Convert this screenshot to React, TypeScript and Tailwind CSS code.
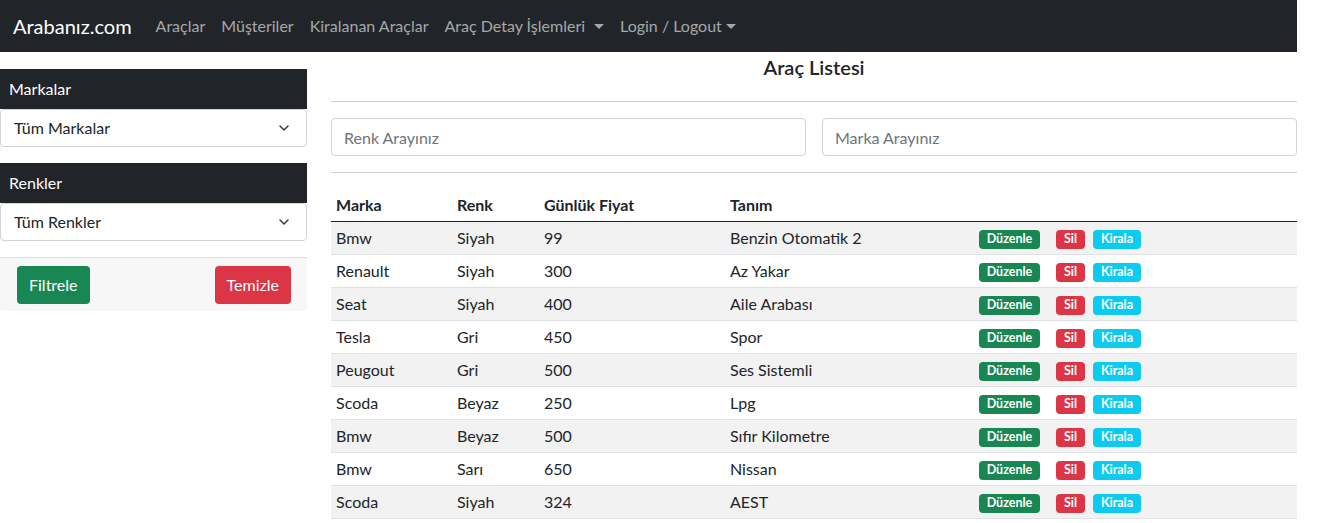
import { ChevronDown } from 'lucide-react'

const cars = [
  { brand: 'Bmw', color: 'Siyah', price: '99', desc: 'Benzin Otomatik 2' },
  { brand: 'Renault', color: 'Siyah', price: '300', desc: 'Az Yakar' },
  { brand: 'Seat', color: 'Siyah', price: '400', desc: 'Aile Arabası' },
  { brand: 'Tesla', color: 'Gri', price: '450', desc: 'Spor' },
  { brand: 'Peugout', color: 'Gri', price: '500', desc: 'Ses Sistemli' },
  { brand: 'Scoda', color: 'Beyaz', price: '250', desc: 'Lpg' },
  { brand: 'Bmw', color: 'Beyaz', price: '500', desc: 'Sıfır Kilometre' },
  { brand: 'Bmw', color: 'Sarı', price: '650', desc: 'Nissan' },
  { brand: 'Scoda', color: 'Siyah', price: '324', desc: 'AEST' },
]

function Caret({ tight }: { tight?: boolean }) {
  return (
    <span
      className={`${tight ? 'ml-[4px]' : 'ml-[9px]'} inline-block h-0 w-0 border-x-[5px] border-t-[5px] border-x-transparent border-t-current align-[3px]`}
    />
  )
}

function NavBar() {
  return (
    <nav className="flex h-[52px] w-[1297px] items-center bg-[#212529] pl-[13px]">
      <span className="mr-4 text-[20px] text-white">Arabanız.com</span>
      <ul className="flex text-[16px] text-[#a6a8aa]">
        <li className="px-2">Araçlar</li>
        <li className="px-2">Müşteriler</li>
        <li className="px-2">Kiralanan Araçlar</li>
        <li className="px-2">
          Araç Detay İşlemleri
          <Caret />
        </li>
        <li className="px-2">
          Login / Logout
          <Caret tight />
        </li>
      </ul>
    </nav>
  )
}

function FilterBox({ title, value }: { title: string; value: string }) {
  return (
    <div>
      <div className="flex h-10 items-center bg-[#212529] px-[9px] text-white">{title}</div>
      <div className="flex h-[38px] items-center justify-between rounded-[4px] border border-[#ced4da] bg-white pl-[13px] pr-[14px]">
        <span>{value}</span>
        <ChevronDown size={16} strokeWidth={2.2} className="text-[#343a40]" />
      </div>
    </div>
  )
}

function Sidebar() {
  return (
    <aside className="flex w-[307px] shrink-0 flex-col gap-4 pt-[17px]">
      <FilterBox title="Markalar" value="Tüm Markalar" />
      <FilterBox title="Renkler" value="Tüm Renkler" />
      <div className="flex h-[54px] items-center justify-between rounded-b-[4px] border-t border-[#dcdcdc] bg-[#f7f7f7] pl-[17px] pr-4">
        <button className="h-[38px] rounded-[4px] bg-[#198754] px-[12px] text-white">Filtrele</button>
        <button className="h-[38px] rounded-[4px] bg-[#dc3545] px-[12px] text-white">Temizle</button>
      </div>
    </aside>
  )
}

function CarTable() {
  return (
    <table className="mt-[15px] w-full border-collapse text-left">
      <thead>
        <tr className="border-b border-[#212529]">
          <th className="h-[33px] w-[122px] px-[5px] pt-px font-bold">Marka</th>
          <th className="w-[87px] px-1 pt-px font-bold">Renk</th>
          <th className="w-[186px] px-1 pt-px font-bold">Günlük Fiyat</th>
          <th className="w-[249px] px-1 pt-px font-bold">Tanım</th>
          <th className="px-1"></th>
        </tr>
      </thead>
      <tbody>
        {cars.map((car, i) => (
          <tr key={i} className={`border-b border-[#dee2e6] ${i % 2 === 0 ? 'bg-[#f2f2f2]' : 'bg-white'}`}>
            <td className="h-[33px] px-[5px]">{car.brand}</td>
            <td className="px-1">{car.color}</td>
            <td className="px-1">{car.price}</td>
            <td className="px-1">{car.desc}</td>
            <td className="px-1">
              <div className="mt-[3px] flex items-center text-[12.5px] font-bold leading-none text-white">
                <span className="flex h-[19px] w-[61px] items-center justify-center rounded-[4px] bg-[#198754]">Düzenle</span>
                <span className="ml-4 flex h-[19px] w-[29px] items-center justify-center rounded-[4px] bg-[#dc3545]">Sil</span>
                <span className="ml-2 flex h-[19px] w-[48px] items-center justify-center rounded-[4px] bg-[#0dcaf0]">Kirala</span>
              </div>
            </td>
          </tr>
        ))}
      </tbody>
    </table>
  )
}

export default function App() {
  return (
    <div className="min-h-screen bg-white font-['Lato','Liberation_Sans',sans-serif] text-[16px] leading-6 text-[#212529]">
      <NavBar />
      <div className="flex w-[1297px] gap-6">
        <Sidebar />
        <main className="flex-1 pt-[3px]">
          <h5 className="text-center text-[20px] font-semibold leading-6">Araç Listesi</h5>
          <hr className="mt-[22px] border-[#cfcfcf]" />
          <div className="mt-4 grid grid-cols-2 gap-4">
            <input
              placeholder="Renk Arayınız"
              className="h-[38px] rounded-[4px] border border-[#ced4da] px-3 placeholder:text-[#6c757d]"
            />
            <input
              placeholder="Marka Arayınız"
              className="h-[38px] rounded-[4px] border border-[#ced4da] px-3 placeholder:text-[#6c757d]"
            />
          </div>
          <hr className="mt-4 border-[#cfcfcf]" />
          <CarTable />
        </main>
      </div>
    </div>
  )
}
